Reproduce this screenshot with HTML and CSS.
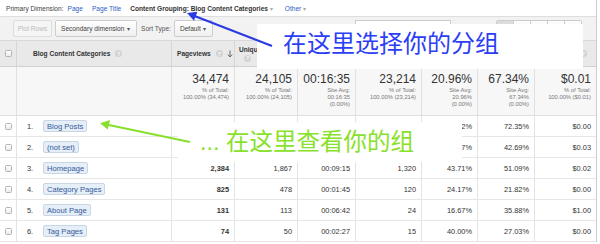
FILE: index.html
```html
<!DOCTYPE html>
<html lang="zh">
<head>
    <meta charset="UTF-8">
    <meta name="viewport" content="width=device-width, initial-scale=1.0">
    <title>Content Grouping Report</title>
    <link rel="stylesheet" href="styles.css">
</head>
<body>
    <div class="report">
        <div class="dimensions">
            <span class="label">Primary Dimension:</span>
            <a class="link">Page</a>
            <a class="link">Page Title</a>
            <span class="current">Content Grouping: Blog Content Categories <span class="caret">&#9662;</span></span>
            <a class="link">Other <span class="caret">&#9662;</span></a>
        </div>

        <div class="toolbar">
            <span class="btn disabled">Plot Rows</span>
            <span class="btn select secondary">Secondary dimension <span class="caret dark">&#9662;</span></span>
            <span class="sort-label">Sort Type:</span>
            <span class="btn select sort">Default <span class="caret dark">&#9662;</span></span>
            <span class="search"></span>
            <span class="views">
                <span class="view on"></span>
                <span class="view"></span>
                <span class="view"></span>
                <span class="view"></span>
                <span class="view"></span>
            </span>
        </div>

        <div class="table">
            <div class="row head">
                <div class="cell check"><span class="box"></span></div>
                <div class="cell name-head">Blog Content Categories <span class="help">?</span></div>
                <div class="cell metric-head">Pageviews <span class="help">?</span>
                    <svg class="sort-arrow" width="6" height="8" viewBox="0 0 6 8"><path d="M3 0.5V7M0.8 4.6L3 7L5.2 4.6" fill="none" stroke="#666" stroke-width="1"/></svg>
                </div>
                <div class="cell metric-head stack"><span class="nowrap">Unique Pageviews</span><span class="help">?</span></div>
                <div class="cell metric-head wrap">Avg. Time on Page <span class="help">?</span></div>
                <div class="cell metric-head">Entrances <span class="help">?</span></div>
                <div class="cell metric-head wrap">Bounce Rate <span class="help">?</span></div>
                <div class="cell metric-head">% Exit <span class="help">?</span></div>
                <div class="cell metric-head wrap">Page Value <span class="help">?</span></div>
            </div>

            <div class="row summary">
                <div class="cell"></div>
                <div class="cell"></div>
                <div class="cell total"><div class="big">34,474</div><div class="sub">% of Total:<br>100.00% (34,474)</div></div>
                <div class="cell total"><div class="big">24,105</div><div class="sub">% of Total:<br>100.00% (24,105)</div></div>
                <div class="cell total"><div class="big">00:16:35</div><div class="sub">Site Avg:<br>00:16:35<br>(0.00%)</div></div>
                <div class="cell total"><div class="big">23,214</div><div class="sub">% of Total:<br>100.00% (23,214)</div></div>
                <div class="cell total"><div class="big">20.96%</div><div class="sub">Site Avg:<br>20.96%<br>(0.00%)</div></div>
                <div class="cell total"><div class="big">67.34%</div><div class="sub">Site Avg:<br>67.34%<br>(0.00%)</div></div>
                <div class="cell total"><div class="big">$0.01</div><div class="sub">% of Total:<br>100.00% ($0.01)</div></div>
            </div>

            <div class="row data">
                <div class="cell check"><span class="box"></span></div>
                <div class="cell name"><span class="num">1.</span><span class="chip">Blog Posts</span></div>
                <div class="cell val strong">29,861</div>
                <div class="cell val">20,983</div>
                <div class="cell val">00:18:21</div>
                <div class="cell val">20,752</div>
                <div class="cell val">20.12%</div>
                <div class="cell val">72.35%</div>
                <div class="cell val">$0.00</div>
            </div>
            <div class="row data">
                <div class="cell check"><span class="box"></span></div>
                <div class="cell name"><span class="num">2.</span><span class="chip">(not set)</span></div>
                <div class="cell val strong">1,138</div>
                <div class="cell val">1,021</div>
                <div class="cell val">00:07:44</div>
                <div class="cell val">1,079</div>
                <div class="cell val">25.67%</div>
                <div class="cell val">42.69%</div>
                <div class="cell val">$0.03</div>
            </div>
            <div class="row data">
                <div class="cell check"><span class="box"></span></div>
                <div class="cell name"><span class="num">3.</span><span class="chip">Homepage</span></div>
                <div class="cell val strong">2,384</div>
                <div class="cell val">1,867</div>
                <div class="cell val">00:09:15</div>
                <div class="cell val">1,320</div>
                <div class="cell val">43.71%</div>
                <div class="cell val">51.09%</div>
                <div class="cell val">$0.02</div>
            </div>
            <div class="row data">
                <div class="cell check"><span class="box"></span></div>
                <div class="cell name"><span class="num">4.</span><span class="chip">Category Pages</span></div>
                <div class="cell val strong">825</div>
                <div class="cell val">478</div>
                <div class="cell val">00:01:45</div>
                <div class="cell val">120</div>
                <div class="cell val">24.17%</div>
                <div class="cell val">21.82%</div>
                <div class="cell val">$0.00</div>
            </div>
            <div class="row data">
                <div class="cell check"><span class="box"></span></div>
                <div class="cell name"><span class="num">5.</span><span class="chip">About Page</span></div>
                <div class="cell val strong">131</div>
                <div class="cell val">113</div>
                <div class="cell val">00:06:42</div>
                <div class="cell val">24</div>
                <div class="cell val">16.67%</div>
                <div class="cell val">35.88%</div>
                <div class="cell val">$1.00</div>
            </div>
            <div class="row data">
                <div class="cell check"><span class="box"></span></div>
                <div class="cell name"><span class="num">6.</span><span class="chip">Tag Pages</span></div>
                <div class="cell val strong">74</div>
                <div class="cell val">50</div>
                <div class="cell val">00:02:27</div>
                <div class="cell val">15</div>
                <div class="cell val">40.00%</div>
                <div class="cell val">27.03%</div>
                <div class="cell val">$0.00</div>
            </div>
        </div>
    </div>

    <!-- annotations on top of the screenshot -->
    <div class="note note-blue">在这里选择你的分组</div>
    <div class="note note-green">... 在这里查看你的组</div>

    <svg class="arrows" width="600" height="244" viewBox="0 0 600 244">
        <line x1="192" y1="15" x2="272" y2="46" stroke="#2b3be2" stroke-width="2.2"/>
        <polygon points="187,13 197.4,11.8 194,20.8" fill="#2b3be2"/>
        <line x1="104" y1="124" x2="190" y2="142" stroke="#88e02c" stroke-width="2.2"/>
        <polygon points="100,123.3 110,120 107.8,129.6" fill="#88e02c"/>
    </svg>
</body>
</html>
```

FILE: styles.css
```css
body {
    margin: 0;
    width: 600px;
    height: 244px;
    overflow: hidden;
    position: relative;
    font-family: "Liberation Sans", Arial, sans-serif;
    color: #333;
    background-color: #fff;
}
.report {
    width: 596px;
    border-right: 1px solid #cfcfcf;
}

/* primary dimension bar */
.dimensions {
    height: 17px;
    box-sizing: border-box;
    display: flex;
    align-items: center;
    padding-left: 6px;
    font-size: 6.6px;
    border-bottom: 1px solid #dedede;
    white-space: nowrap;
}
.dimensions .label {
    color: #444;
    margin-right: 4px;
}
.link {
    color: #2d5cc4;
    margin-right: 9px;
}
.current {
    font-weight: bold;
    color: #333;
    margin-right: 12px;
}
.caret {
    color: #aaa;
    font-size: 6px;
    font-weight: normal;
}
.caret.dark {
    color: #555;
}

/* toolbar */
.toolbar {
    height: 23px;
    box-sizing: border-box;
    display: flex;
    align-items: center;
    padding: 0 14px 0 13px;
    background-color: #f2f2f2;
    font-size: 6.6px;
    white-space: nowrap;
}
.btn {
    height: 17px;
    box-sizing: border-box;
    display: flex;
    align-items: center;
    justify-content: center;
    border: 1px solid #cdcdcd;
    border-radius: 2px;
    background: linear-gradient(#fefefe, #f0f0f0);
    color: #444;
    margin-right: 3px;
}
.btn.disabled {
    width: 39px;
    color: #bbb;
    border-color: #dcdcdc;
    background: #f5f5f5;
}
.btn.select {
    justify-content: space-between;
    padding: 0 6px 0 5px;
}
.btn.secondary {
    width: 82px;
}
.btn.sort {
    width: 39px;
}
.sort-label {
    color: #555;
    margin: 0 3px 0 1px;
}
.search {
    margin-left: auto;
    width: 96px;
    height: 17px;
    box-sizing: border-box;
    border: 1px solid #ccc;
    background-color: #fff;
}
.views {
    display: flex;
    margin-left: 45px;
    border: 1px solid #ccc;
    border-radius: 2px;
}
.view {
    width: 16px;
    height: 16px;
    border-left: 1px solid #ccc;
    background: linear-gradient(#fdfdfd, #efefef);
}
.view:first-child {
    border-left: none;
}
.view.on {
    background: #dcdcdc;
}

/* table */
.row {
    display: grid;
    grid-template-columns: 17px 155px 63px 63px 58px 66px 56px 57px 61px;
}
.cell {
    box-sizing: border-box;
    border-right: 1px solid #e3e3e3;
    min-width: 0;
}
.cell:last-child {
    border-right: none;
}
.check {
    display: flex;
    align-items: center;
    justify-content: center;
}
.box {
    width: 7px;
    height: 7px;
    box-sizing: border-box;
    border: 1px solid #b4b4b4;
    border-radius: 1.5px;
    background: linear-gradient(#fff, #ebebeb);
}

.head {
    height: 27px;
    box-sizing: border-box;
    background-color: #e9e9e9;
    border-top: 1px solid #d8d8d8;
    border-bottom: 1px solid #d0d0d0;
    font-size: 6.6px;
    font-weight: bold;
    color: #333;
}
.head .cell {
    border-right-color: #d6d6d6;
    white-space: nowrap;
}
.head .cell.wrap {
    white-space: normal;
    line-height: 8px;
}
.name-head {
    display: flex;
    align-items: center;
    padding-left: 16px;
}
.metric-head {
    display: flex;
    align-items: center;
    padding-left: 5px;
}
.metric-head.stack {
    flex-direction: column;
    align-items: flex-start;
    justify-content: center;
    padding-left: 4px;
    overflow: hidden;
}
.stack .help {
    margin: 2px 0 0 5px;
}
.help {
    display: inline-flex;
    align-items: center;
    justify-content: center;
    flex-shrink: 0;
    width: 7px;
    height: 7px;
    border-radius: 50%;
    background-color: #d2d2d2;
    color: #fff;
    font-size: 5px;
    margin-left: 5px;
}
.sort-arrow {
    margin-left: 4px;
}

.summary {
    height: 49px;
    box-sizing: border-box;
    background-color: #f7f7f7;
    border-bottom: 1px solid #e0e0e0;
}
.summary .cell {
    border-right-color: #e0e0e0;
}
.total {
    text-align: right;
    padding: 6px 5px 0 0;
    white-space: nowrap;
}
.big {
    font-size: 12px;
    line-height: 13px;
    color: #333;
}
.sub {
    font-size: 5.8px;
    line-height: 7px;
    color: #777;
    margin-top: 1px;
}

.data {
    height: 21px;
    box-sizing: border-box;
    border-bottom: 1px solid #e6e6e6;
    font-size: 7.4px;
}
.name {
    display: flex;
    align-items: center;
    padding-left: 10px;
}
.num {
    width: 16px;
}
.chip {
    height: 12px;
    box-sizing: border-box;
    display: flex;
    align-items: center;
    padding: 0 3px;
    border: 1px solid #c8d5e5;
    border-radius: 2px;
    background-color: #e6eef8;
    color: #34599a;
    font-size: 7.6px;
}
.val {
    display: flex;
    align-items: center;
    justify-content: flex-end;
    padding-right: 5px;
}
.val.strong {
    font-weight: bold;
}

/* annotations */
.note {
    position: absolute;
    box-sizing: border-box;
    background-color: #fff;
    white-space: nowrap;
    font-family: "Liberation Sans", "Noto Sans CJK SC", sans-serif;
}
.note-blue {
    left: 257px;
    top: 24px;
    width: 326px;
    height: 45px;
    padding: 8px 0 0 26px;
    font-size: 24px;
    line-height: 24px;
    color: #2c3ef4;
}
.note-green {
    left: 178px;
    top: 122px;
    width: 284px;
    height: 40px;
    padding: 9px 0 0 22px;
    font-size: 23.5px;
    line-height: 23px;
    color: #88e12a;
}
.arrows {
    position: absolute;
    left: 0;
    top: 0;
    pointer-events: none;
}
```
